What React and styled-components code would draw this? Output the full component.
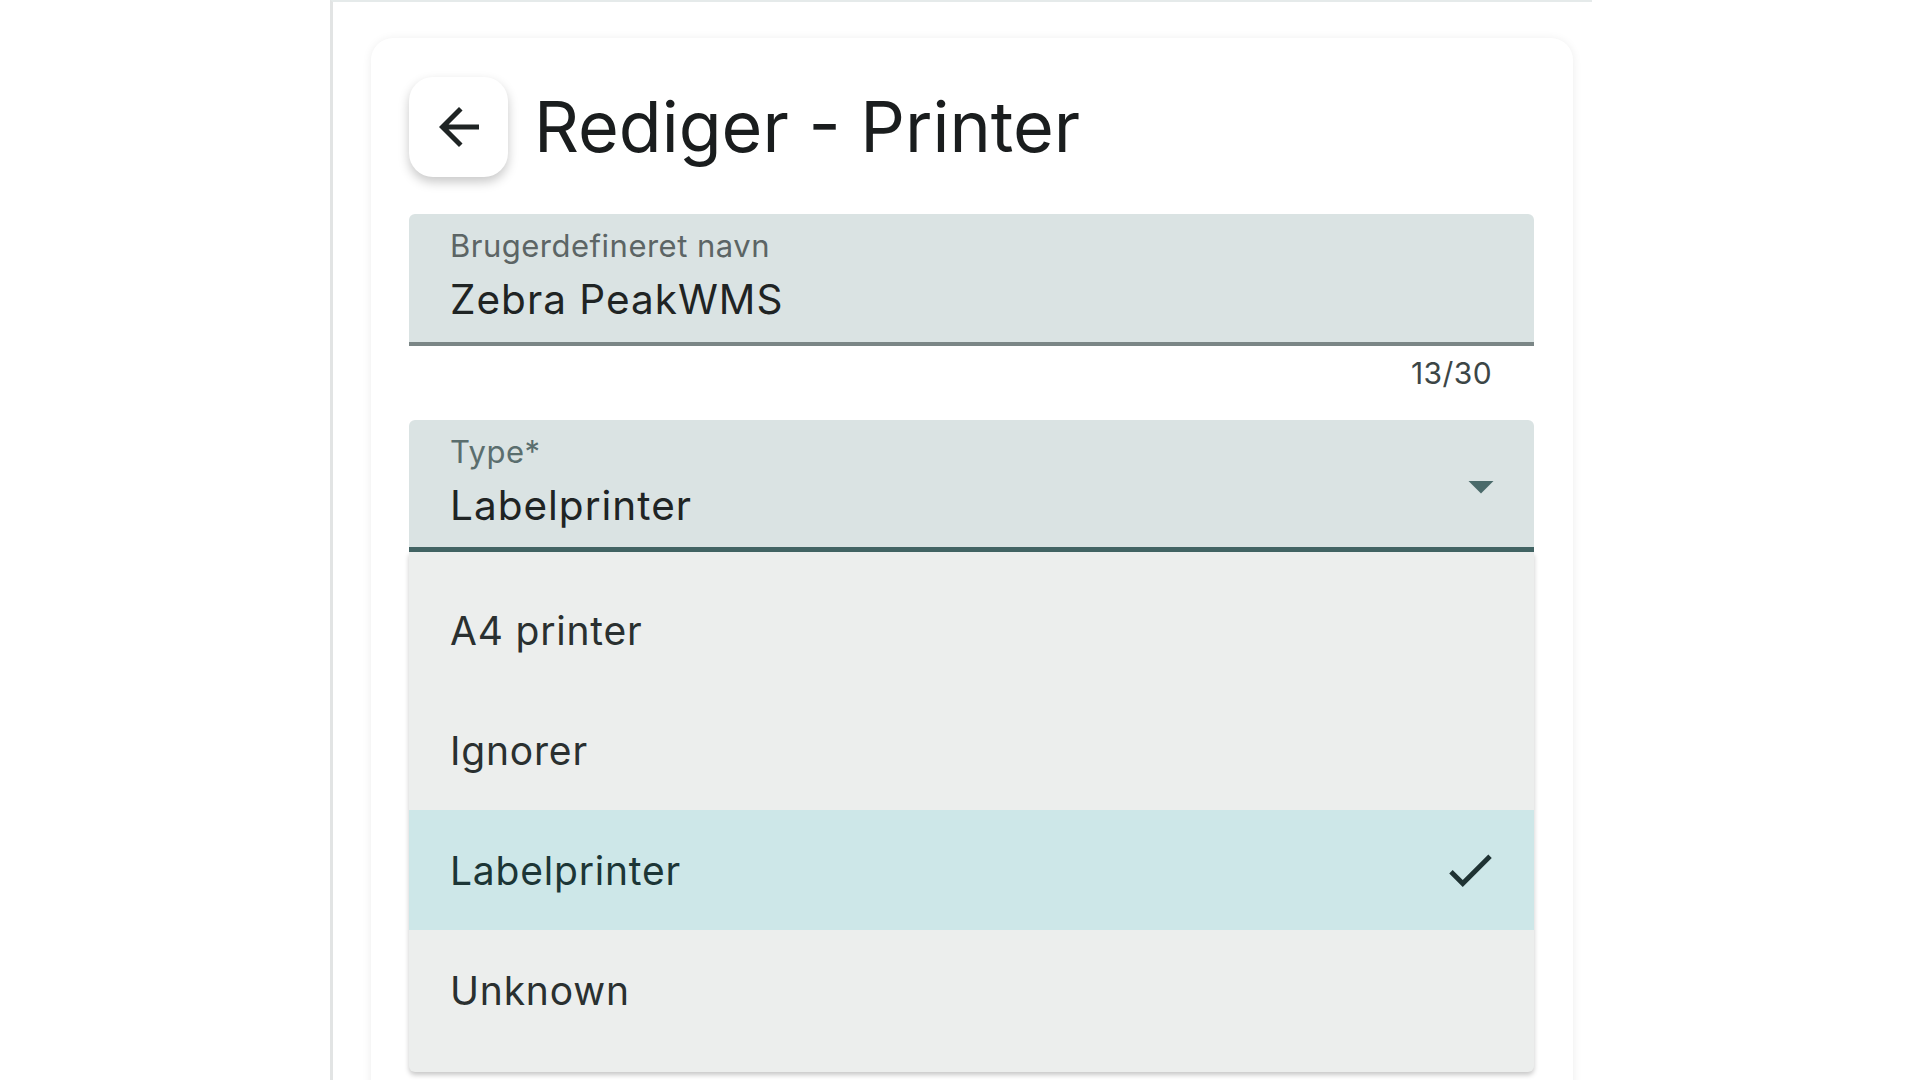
import React from 'react'
import styled, { createGlobalStyle } from 'styled-components'

const GlobalStyle = createGlobalStyle`
	html, body {
		margin: 0;
		padding: 0;
		background: #ffffff;
		font-family: Inter, "Noto Sans", sans-serif;
		overflow: hidden;
	}
	* {
		box-sizing: border-box;
	}
`

const options = ['A4 printer', 'Ignorer', 'Labelprinter', 'Unknown']

const App = () => {
	const selected = 'Labelprinter'
	const name = 'Zebra PeakWMS'

	return (
		<>
			<GlobalStyle />
			<Page>
				<Main>
					<Card>
						<Header>
							<BackButton aria-label="Tilbage">
								<svg width="60" height="60" viewBox="0 0 24 24">
									<path fill="#1f2424" d="M20 11H7.83l5.59-5.59L12 4l-8 8 8 8 1.41-1.41L7.83 13H20v-2z" />
								</svg>
							</BackButton>
							<Title>Rediger - Printer</Title>
						</Header>

						<FilledField>
							<FieldLabel>Brugerdefineret navn</FieldLabel>
							<FieldValue>{name}</FieldValue>
						</FilledField>
						<Counter>{name.length}/30</Counter>

						<SelectWrap>
							<FilledField $active>
								<FieldLabel $active>Type*</FieldLabel>
								<FieldValue>{selected}</FieldValue>
								<Caret width="60" height="60" viewBox="0 0 24 24">
									<path fill="#4a6a6a" d="M7 10l5 5 5-5z" />
								</Caret>
							</FilledField>
							<Menu>
								{options.map(opt => (
									<MenuItem key={opt} $selected={opt === selected}>
										{opt}
										{opt === selected && (
											<svg width="58" height="58" viewBox="0 0 24 24">
												<path fill="#1f3333" d="M9 16.17L4.83 12l-1.42 1.41L9 19 21 7l-1.41-1.41z" />
											</svg>
										)}
									</MenuItem>
								))}
							</Menu>
						</SelectWrap>
					</Card>
				</Main>
			</Page>
		</>
	)
}

export default App

const Page = styled.div`
	display: flex;
	height: 100vh;
	padding-left: 330px;
`

const Main = styled.main`
	width: 1262px;
	border-left: 3px solid #e2e4e4;
	border-top: 2px solid #e5eaea;
	padding: 36px 19px 0 38px;
`

const Card = styled.section`
	width: 1202px;
	min-height: 1200px;
	background: #ffffff;
	border-radius: 22px;
	box-shadow: 0 1px 10px rgba(0, 0, 0, 0.08);
	padding: 39px 38px;
`

const Header = styled.div`
	display: flex;
	align-items: center;
	gap: 26px;
	margin-bottom: 37px;
`

const BackButton = styled.button`
	display: flex;
	align-items: center;
	justify-content: center;
	width: 99px;
	height: 100px;
	border: none;
	border-radius: 24px;
	background: #ffffff;
	box-shadow: 0 5px 11px rgba(0, 0, 0, 0.22);
	padding: 0;
	cursor: pointer;
`

const Title = styled.h1`
	margin: 0;
	font-size: 70px;
	font-weight: 400;
	line-height: 1;
	color: #1a1d1e;
`

const FilledField = styled.div`
	position: relative;
	display: flex;
	flex-direction: column;
	gap: 12px;
	width: 1125px;
	height: 132px;
	padding: 14px 41px 0;
	background: #dae3e3;
	border-radius: 6px 6px 0 0;
	border-bottom: ${p => (p.$active ? '5px solid #426464' : '4px solid #7b8686')};
`

const FieldLabel = styled.span`
	font-size: 31px;
	line-height: 36px;
	letter-spacing: 0.5px;
	color: ${p => (p.$active ? '#5a6e6e' : '#5c6565')};
`

const FieldValue = styled.span`
	font-size: 40.5px;
	line-height: 47px;
	letter-spacing: 1px;
	color: #1f2424;
`

const Caret = styled.svg`
	position: absolute;
	right: 23px;
	top: 36px;
`

const Counter = styled.div`
	width: 1125px;
	padding: 9px 42px 0 0;
	text-align: right;
	font-size: 30px;
	line-height: 36px;
	letter-spacing: 0.4px;
	color: #3c4646;
	margin-bottom: 29px;
`

const SelectWrap = styled.div`
	position: relative;
	width: 1125px;
`

const Menu = styled.ul`
	position: absolute;
	top: 100%;
	left: 0;
	width: 1125px;
	margin: 0;
	padding: 18px 0 22px;
	list-style: none;
	background: #eceeed;
	border-radius: 0 0 6px 6px;
	box-shadow: 0 3px 5px rgba(0, 0, 0, 0.22);
`

const MenuItem = styled.li`
	display: flex;
	align-items: center;
	justify-content: space-between;
	height: 120px;
	padding: 0 35px 0 41px;
	font-size: 39px;
	letter-spacing: 0.8px;
	color: ${p => (p.$selected ? '#1c3636' : '#2a3030')};
	background: ${p => (p.$selected ? '#cde7e8' : 'transparent')};
`
